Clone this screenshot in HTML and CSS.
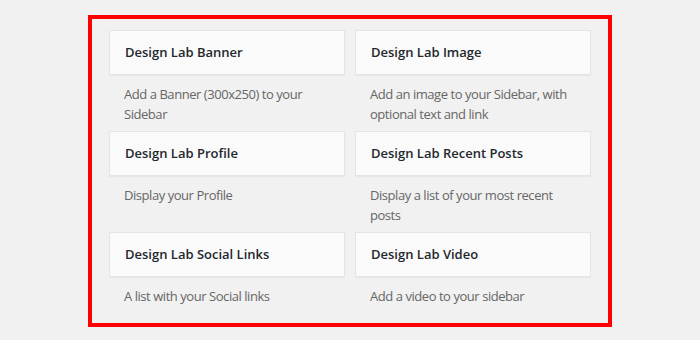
FILE: index.html
```html
<!DOCTYPE html>
<html lang="en">
<head>
    <meta charset="UTF-8">
    <title>Available Widgets</title>
    <link rel="stylesheet" href="styles.css">
</head>
<body>
    <div class="widget-list">
        <div class="widget">
            <div class="widget-top"><h3>Design Lab Banner</h3></div>
            <div class="widget-description">Add a Banner (300x250) to your Sidebar</div>
        </div>
        <div class="widget">
            <div class="widget-top"><h3>Design Lab Image</h3></div>
            <div class="widget-description">Add an image to your Sidebar, with optional text and link</div>
        </div>
        <div class="widget">
            <div class="widget-top"><h3>Design Lab Profile</h3></div>
            <div class="widget-description">Display your Profile</div>
        </div>
        <div class="widget">
            <div class="widget-top"><h3>Design Lab Recent Posts</h3></div>
            <div class="widget-description">Display a list of your most recent posts</div>
        </div>
        <div class="widget">
            <div class="widget-top"><h3>Design Lab Social Links</h3></div>
            <div class="widget-description">A list with your Social links</div>
        </div>
        <div class="widget">
            <div class="widget-top"><h3>Design Lab Video</h3></div>
            <div class="widget-description">Add a video to your sidebar</div>
        </div>
    </div>
</body>
</html>
```

FILE: styles.css
```css
body {
    margin: 0;
    padding-top: 15px;
    background: #f1f1f1;
    font-family: "Open Sans", "Noto Sans", sans-serif;
    font-size: 13px;
    color: #444;
}
.widget-list {
    box-sizing: border-box;
    width: 524px;
    height: 312px;
    margin: 0 auto;
    border: 4px solid #ff0000;
    padding: 11px 17px 9px;
    display: grid;
    grid-template-columns: 236px 236px;
    column-gap: 10px;
    align-content: start;
}
.widget-top {
    background: #fafafa;
    border: 1px solid #e5e5e5;
    box-shadow: 0 1px 1px rgba(0,0,0,0.04);
}
.widget-top h3 {
    margin: 0;
    padding: 15px;
    font-size: 13px;
    font-weight: 600;
    line-height: 13px;
    color: #23282d;
}
.widget-description {
    padding: 10px 15px 7px;
    line-height: 19.5px;
    letter-spacing: -0.45px;
    color: #666;
}
```
